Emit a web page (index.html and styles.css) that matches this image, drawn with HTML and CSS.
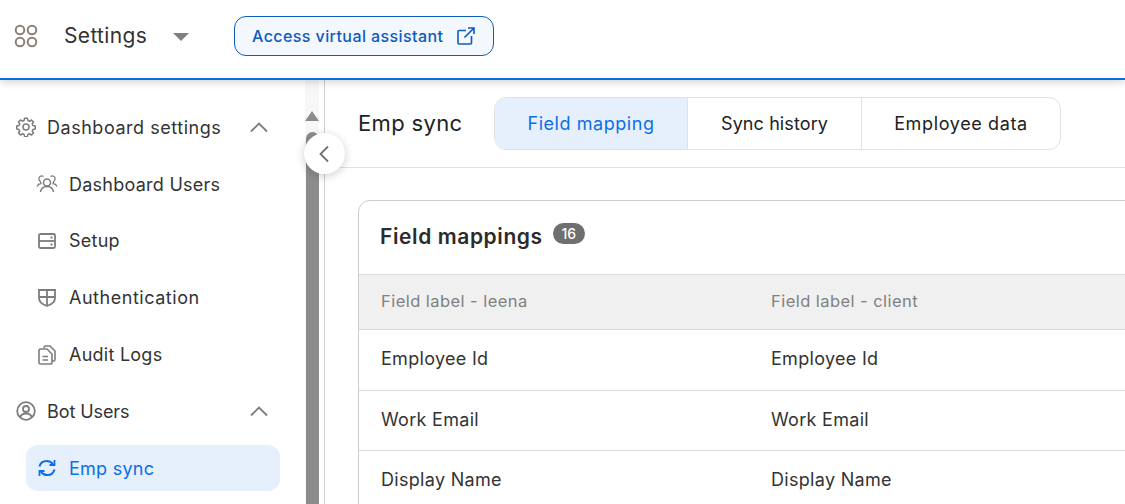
FILE: index.html
```html
<!DOCTYPE html>
<html lang="en">
<head>
<meta charset="utf-8">
<title>Settings - Emp sync</title>
<link rel="stylesheet" href="styles.css">
</head>
<body>
<div class="app">
  <header class="topbar">
    <svg class="apps-icon" width="24" height="24" viewBox="0 0 24 24" fill="none" stroke="#8a8178" stroke-width="2"><circle cx="6" cy="6" r="4.3"/><circle cx="18" cy="6" r="4.3"/><circle cx="6" cy="18" r="4.3"/><circle cx="18" cy="18" r="4.3"/></svg>
    <span class="app-name">Settings</span>
    <span class="caret"></span>
    <button class="assistant-btn">
      <span>Access virtual assistant</span>
      <svg width="18" height="18" viewBox="0 0 18 18" fill="none" stroke="#0f5bbd" stroke-width="1.6"><path d="M9 3.5H2a1 1 0 0 0-1 1V16a1 1 0 0 0 1 1h11.5a1 1 0 0 0 1-1V9"/><path d="M7.5 10.500 17 1M11 1h6v6"/></svg>
    </button>
  </header>
  <div class="body-row">
    <aside class="sidebar">
      <nav class="nav">
        <div class="nav-item group">
          <svg class="ico" width="20" height="20" viewBox="0 0 24 24" fill="none" stroke="#7d7d7d" stroke-width="1.8" stroke-linejoin="round"><path d="M10.3 2.5h3.4l.6 2.800 1.900.8 2.400-1.500 2.400 2.400-1.500 2.400.8 1.900 2.800.6v3.400l-2.800.6-.8 1.900 1.500 2.400-2.400 2.400-2.400-1.500-1.900.8-.6 2.800h-3.400l-.6-2.800-1.900-.8-2.400 1.500-2.400-2.400 1.500-2.400-.8-1.900-2.800-.6v-3.400l2.800-.6.8-1.900L3 6.900l2.400-2.400 2.400 1.500 1.900-.8z" transform="translate(0 -1)"/><circle cx="12" cy="12" r="3.6"/></svg>
          <span class="label wide">Dashboard settings</span>
          <svg class="chev" width="20" height="12" viewBox="0 0 20 12" fill="none" stroke="#7d7d7d" stroke-width="1.8"><path d="M2 10.500 10 2.500l8 8"/></svg>
        </div>
        <div class="nav-item sub">
          <svg class="ico" width="22" height="20" viewBox="0 0 22 20" fill="none" stroke="#7d7d7d" stroke-width="1.5"><circle cx="11" cy="8.5" r="3.5"/><path d="M4.500 18c.5-3.500 3-5.500 6.500-5.500s6 2 6.500 5.500"/><path d="M7.500 2.500a3 3 0 0 0-3.500 0 2.800 2.800 0 0 0 0 4.500L5 9.500c-2 .3-3.300 1.300-4 3M14.500 2.500a3 3 0 0 1 3.500 0 2.800 2.800 0 0 1 0 4.500L17 9.500c2 .3 3.300 1.300 4 3" stroke-width="1.3"/></svg>
          <span class="label">Dashboard Users</span>
        </div>
        <div class="nav-item sub">
          <svg class="ico" width="18" height="16" viewBox="0 0 18 16" fill="none" stroke="#7d7d7d" stroke-width="1.8"><rect x="1" y="1" width="16" height="14" rx="1.5"/><path d="M1 8h16"/><path d="M12.500 4.500h2M12.500 11.500h2"/></svg>
          <span class="label">Setup</span>
        </div>
        <div class="nav-item sub">
          <svg class="ico" width="18" height="19" viewBox="0 0 18 19" fill="none" stroke="#7d7d7d" stroke-width="1.8"><path d="M1 2h16v8c0 4-3.500 6.500-8 8-4.500-1.500-8-4-8-8z"/><path d="M9 2v16M1 9h16"/></svg>
          <span class="label wide">Authentication</span>
        </div>
        <div class="nav-item sub">
          <svg class="ico" width="18" height="20" viewBox="0 0 18 20" fill="none" stroke="#7d7d7d" stroke-width="1.6"><path d="M6 3V2.500A1.500 1.500 0 0 1 7.500 1H12l5 5v8.500a1.500 1.500 0 0 1-1.500 1.500H14"/><path d="M2.500 4H9l5 5v8.500a1.500 1.500 0 0 1-1.500 1.500h-10A1.500 1.500 0 0 1 1 17.500v-12A1.500 1.500 0 0 1 2.500 4z"/><path d="M4.500 11.500H10M4.500 15H10"/></svg>
          <span class="label">Audit Logs</span>
        </div>
        <div class="nav-item group">
          <svg class="ico" width="20" height="20" viewBox="0 0 20 20" fill="none" stroke="#7d7d7d" stroke-width="1.8"><circle cx="10" cy="10" r="8.8"/><circle cx="10" cy="8" r="3"/><path d="M4 16.500c1-2.800 3-4 6-4s5 1.200 6 4"/></svg>
          <span class="label narrow">Bot Users</span>
          <svg class="chev" width="20" height="12" viewBox="0 0 20 12" fill="none" stroke="#7d7d7d" stroke-width="1.8"><path d="M2 10.500 10 2.500l8 8"/></svg>
        </div>
        <div class="nav-item sub active">
          <svg class="ico" width="18" height="18" viewBox="0 0 18 18" fill="none" stroke="#0b6fe8" stroke-width="2"><path d="M1.500 7.500C2.300 4 5.300 2 8.800 2c2.600 0 4.700 1.200 6.200 3.200"/><path d="M16.500 1v5h-5" stroke-width="1.8"/><path d="M16.500 10.500c-.8 3.500-3.800 5.500-7.300 5.500-2.600 0-4.700-1.200-6.200-3.200"/><path d="M1.500 17v-5h5" stroke-width="1.8"/></svg>
          <span class="label">Emp sync</span>
        </div>
      </nav>
      <div class="scrollbar">
        <span class="scroll-up"></span>
        <span class="scroll-thumb"></span>
      </div>
    </aside>
    <button class="collapse-btn" aria-label="Collapse">
      <svg width="12" height="18" viewBox="0 0 12 18" fill="none" stroke="#707070" stroke-width="1.8"><path d="M10 1.500 2.500 9l7.500 7.500"/></svg>
    </button>
    <main class="content">
      <div class="subhead">
        <h1 class="page-title">Emp sync</h1>
        <div class="tabs">
          <div class="tab tab-active">Field mapping</div>
          <div class="tab tab-sync">Sync history</div>
          <div class="tab tab-data">Employee data</div>
        </div>
      </div>
      <section class="card">
        <div class="card-head">
          <h2 class="card-title">Field mappings</h2>
          <span class="badge">16</span>
        </div>
        <div class="row row-head"><div>Field label - leena</div><div>Field label - client</div></div>
        <div class="row"><div>Employee Id</div><div>Employee Id</div></div>
        <div class="row"><div>Work Email</div><div>Work Email</div></div>
        <div class="row"><div>Display Name</div><div>Display Name</div></div>
      </section>
    </main>
  </div>
</div>
</body>
</html>
```
FILE: styles.css
```css
* { box-sizing: border-box; }
html, body { margin: 0; height: 100%; overflow: hidden; }
body { font-family: Inter, "Noto Sans", sans-serif; color: #333; background: #fff; }
.app { height: 504px; display: flex; flex-direction: column; overflow: hidden; }

.topbar {
  height: 80px; flex: none; display: flex; align-items: center;
  padding: 0 0 6px 14px; border-bottom: 2px solid #0b6be0;
  box-shadow: 0 2px 8px rgba(0,0,0,.18); position: relative; z-index: 2; background: #fff;
}
.apps-icon { flex: none; }
.app-name { margin: 0 0 2px 26px; font-size: 21px; letter-spacing: .35px; width: 109px; color: #333; }
.caret { width: 0; height: 0; border-left: 8px solid transparent; border-right: 8px solid transparent; border-top: 8px solid #808080; margin-top: 1px; }
.assistant-btn {
  margin-left: 45px; width: 260px; height: 40px; display: flex; align-items: center; justify-content: space-between;
  padding: 0 18px 0 17px; background: #f3f7fe; border: 1px solid #0f5bbd; border-radius: 12px;
  font: 500 16px Inter, sans-serif; letter-spacing: .42px; color: #0f5bbd;
}

.body-row { flex: 1; display: flex; position: relative; min-height: 0; }
.sidebar { width: 325px; flex: none; display: flex; border-right: 1px solid #cfcfcf; padding-right: 5px; }
.nav { flex: 1; padding: 24.3px 25px 0 16px; display: flex; flex-direction: column; gap: 10.83px; min-width: 0; }
.nav-item { height: 46px; flex: none; display: flex; align-items: center; font-size: 18px; color: #333; letter-spacing: .25px; }
.wide { letter-spacing: .53px; }
.narrow { letter-spacing: -.08px; }
.group .ico { width: 20px; margin-right: 11px; flex: none; }
.group .label { flex: 1; }
.chev { flex: none; margin-right: 11px; }
.sub { margin-left: 10px; padding-left: 12px; border-radius: 12px; }
.sub .ico { margin-right: 13px; flex: none; width: 18px; }
.sub:nth-child(2) .ico { width: 22px; margin: 0 11px 0 -2px; }
.active { background: #e6f0fc; color: #0b6fe8; }

.scrollbar { width: 14px; flex: none; background: #f7f7f7; display: flex; flex-direction: column; align-items: center; padding-top: 31px; }
.scroll-up { width: 0; height: 0; border-left: 7.5px solid transparent; border-right: 7.5px solid transparent; border-bottom: 10px solid #8c8c8c; }
.scroll-thumb { width: 13px; flex: 1; margin-top: 11px; background: #8c8c8c; border-radius: 7px 7px 0 0; }

.collapse-btn {
  position: absolute; left: 304px; top: 53px; width: 41px; height: 41px; border-radius: 50%;
  background: #fff; border: 0; padding: 0 2px 0 0; display: flex; align-items: center; justify-content: center;
  box-shadow: 0 2px 10px rgba(0,0,0,.2); z-index: 3;
}

.content { flex: 1; min-width: 0; overflow: hidden; }
.subhead { height: 88px; display: flex; align-items: center; padding: 0 0 2px 33px; border-bottom: 1px solid #e2e2e2; }
.page-title { margin: 0 32px 0 0; width: 104px; font-size: 22px; font-weight: 400; letter-spacing: .35px; color: #222; white-space: nowrap; }
.tabs { display: flex; height: 53px; border: 1px solid #e2e2e2; border-radius: 12px; overflow: hidden; margin-top: 1px; }
.tab { display: flex; align-items: center; justify-content: center; width: 174px; padding-top: 1px; font-size: 18px; letter-spacing: .1px; color: #222; border-left: 1px solid #e2e2e2; }
.tab-active { width: 192px; border-left: 0; background: #e6f0fc; color: #0b6fe8; letter-spacing: .55px; }
.tab-data { width: 199px; letter-spacing: .63px; }

.card { margin: 32px 0 0 33px; width: 1000px; border: 1px solid #ccc; border-radius: 12px 0 0 0; }
.card-head { height: 74px; display: flex; align-items: flex-start; padding: 23px 0 0 21px; border-bottom: 1px solid #ddd; }
.card-title { margin: 0 10px 0 0; font-size: 21px; font-weight: 600; line-height: 26px; letter-spacing: .6px; color: #2b2b2b; white-space: nowrap; }
.badge { background: #6f6f6f; color: #fff; font-size: 14px; font-weight: 500; width: 32px; height: 21px; margin-top: -1px; border-radius: 10.5px; display: flex; align-items: center; justify-content: center; }
.row { display: grid; grid-template-columns: 390px 1fr; align-items: center; height: 60.5px; padding: 0 0 2px 22px; font-size: 18px; letter-spacing: .3px; border-bottom: 1px solid #ddd; color: #333; }
.row-head { height: 55px; background: #f0f0f0; font-size: 16.5px; color: #808080; letter-spacing: .45px; }
```
